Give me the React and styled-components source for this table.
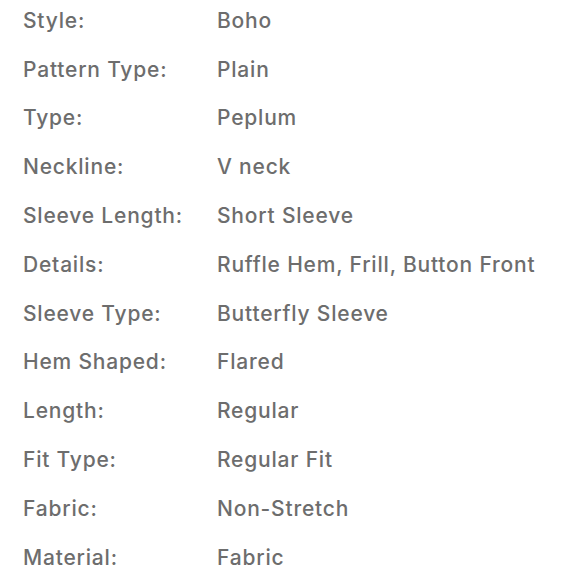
import React from 'react';
import styled, { createGlobalStyle } from 'styled-components';

const Global = createGlobalStyle`
  body {
    margin: 0;
    background: #ffffff;
    font-family: Inter, "Noto Sans", sans-serif;
  }
`;

const Table = styled.div`
  display: grid;
  grid-template-columns: 194px 1fr;
  grid-auto-rows: 48.8px;
  padding: 0 0 0 23px;
  margin-top: -4px;
  color: #6d6d6d;
  font-size: 21px;
  font-weight: 500;
  letter-spacing: 0.8px;
`;

const Cell = styled.div`
  display: flex;
  align-items: center;
  white-space: nowrap;
`;

const specs = [
  ['Style:', 'Boho'],
  ['Pattern Type:', 'Plain'],
  ['Type:', 'Peplum'],
  ['Neckline:', 'V neck'],
  ['Sleeve Length:', 'Short Sleeve'],
  ['Details:', 'Ruffle Hem, Frill, Button Front'],
  ['Sleeve Type:', 'Butterfly Sleeve'],
  ['Hem Shaped:', 'Flared'],
  ['Length:', 'Regular'],
  ['Fit Type:', 'Regular Fit'],
  ['Fabric:', 'Non-Stretch'],
  ['Material:', 'Fabric'],
];

export default function App() {
  return (
    <>
      <Global />
      <Table>
        {specs.map(([k, v]) => (
          <React.Fragment key={k}>
            <Cell>{k}</Cell>
            <Cell>{v}</Cell>
          </React.Fragment>
        ))}
      </Table>
    </>
  );
}
